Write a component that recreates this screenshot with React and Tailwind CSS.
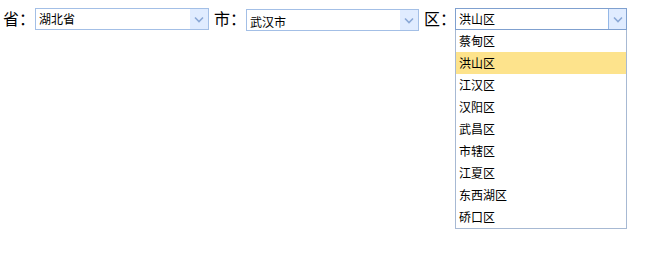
import React from "react";

const font = { fontFamily: '"Microsoft YaHei", "Noto Sans CJK SC", "Noto Sans", sans-serif' };

function Arrow({ active }) {
  return (
    <div className={`w-[18px] h-full flex items-center justify-center bg-[#e0ecff] ${active ? "border-l border-[#95b8e7]" : ""}`}>
      <svg width="10" height="7" viewBox="0 0 10 7">
        <path d="M1 1.5 L5 5.5 L9 1.5" fill="none" stroke="#8aa8d6" strokeWidth="1.6" />
      </svg>
    </div>
  );
}

function Combo({ value, width, active, textPt }) {
  return (
    <div
      className={`relative flex h-[22px] border bg-white ${active ? "border-[#7fa0cf]" : "border-[#a3bfe6]"}`}
      style={{ width }}
    >
      <div className={`flex-1 text-[12px] leading-[20px] pl-[3px] text-black ${textPt}`}>{value}</div>
      <Arrow active={active} />
    </div>
  );
}

const items = ["蔡甸区", "洪山区", "江汉区", "汉阳区", "武昌区", "市辖区", "江夏区", "东西湖区", "硚口区"];

export default function App() {
  return (
    <div className="w-[656px] h-[267px] bg-white" style={font}>
      <div className="flex items-start pl-[3px] pt-[8px]">
        <div className="w-[32px] text-[16px] leading-[20px] text-black">省：</div>
        <Combo value="湖北省" width="174px" textPt="pt-[0px]" />
        <div className="ml-[5px] w-[32px] text-[16px] leading-[20px] text-black">市：</div>
        <div className="pt-[1px]">
          <Combo value="武汉市" width="173px" textPt="pt-[2px]" />
        </div>
        <div className="ml-[5px] w-[31px] text-[16px] leading-[20px] text-black">区：</div>
        <div className="relative">
          <Combo value="洪山区" width="172px" active textPt="pt-[0px]" />
          <div className="absolute left-0 top-[22px] w-[172px] border border-t-0 border-[#a7b9d3] bg-white">
            {items.map((it, i) => (
              <div
                key={it}
                className={`h-[22px] text-[12px] leading-[22px] pl-[3px] text-black ${i === 1 ? "bg-[#fde38c]" : ""}`}
              >
                {it}
              </div>
            ))}
          </div>
        </div>
      </div>
    </div>
  );
}
